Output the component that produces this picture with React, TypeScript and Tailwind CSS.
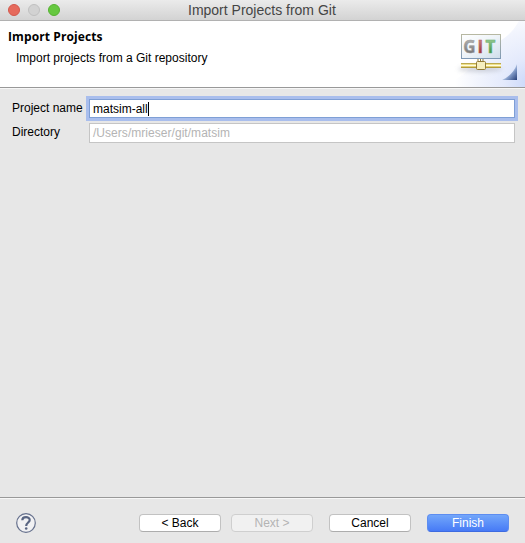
import type { ReactNode } from "react";

function TitleBar() {
  return (
    <div className="flex h-[21px] shrink-0 items-center border-b border-[#b1b1b1] bg-linear-to-b from-[#ebebeb] to-[#d3d3d3]">
      <div className="flex gap-2 pl-2">
        <span className="size-3 rounded-full border border-[#d3584c] bg-[#e66a5c]" />
        <span className="size-3 rounded-full border border-[#c0c0c0] bg-[#d2d2d2]" />
        <span className="size-3 rounded-full border border-[#55b231] bg-[#66c840]" />
      </div>
      <h1 className="ml-32 whitespace-nowrap text-[14px] leading-5 text-[#454545]">
        Import Projects from Git
      </h1>
    </div>
  );
}

function GitBanner() {
  return (
    <svg className="block h-[66px] w-20 shrink-0" viewBox="445 21 80 66">
      <defs>
        <radialGradient id="glow" gradientUnits="userSpaceOnUse" cx="530" cy="84" r="75">
          <stop offset="0" stopColor="#c9d7fa" />
          <stop offset="0.35" stopColor="#e4eafc" />
          <stop offset="0.7" stopColor="#f1f4fd" />
          <stop offset="1" stopColor="#ffffff" />
        </radialGradient>
        <linearGradient id="panel" x1="0" y1="0" x2="1" y2="1">
          <stop offset="0" stopColor="#ffffff" />
          <stop offset="0.5" stopColor="#edf3f8" />
          <stop offset="1" stopColor="#cfdeea" />
        </linearGradient>
        <linearGradient id="frame" x1="0" y1="0" x2="0" y2="1">
          <stop offset="0" stopColor="#b7b8a2" />
          <stop offset="1" stopColor="#7f99b5" />
        </linearGradient>
        <linearGradient id="pipe" x1="0" y1="0" x2="0" y2="1">
          <stop offset="0" stopColor="#a38d32" />
          <stop offset="0.3" stopColor="#eee08a" />
          <stop offset="0.5" stopColor="#fffde0" />
          <stop offset="0.8" stopColor="#d4bb43" />
          <stop offset="1" stopColor="#8d7a36" />
        </linearGradient>
        <linearGradient id="corner" x1="0" y1="0" x2="1" y2="1">
          <stop offset="0.4" stopColor="#dce7fa" />
          <stop offset="0.65" stopColor="#7f97c5" />
          <stop offset="1" stopColor="#263e78" />
        </linearGradient>
        <linearGradient id="g" x1="0" y1="0" x2="0" y2="1">
          <stop offset="0.2" stopColor="#b0b0b0" />
          <stop offset="0.8" stopColor="#777" />
        </linearGradient>
        <linearGradient id="i" x1="0" y1="0" x2="0" y2="1">
          <stop offset="0.2" stopColor="#c78283" />
          <stop offset="0.8" stopColor="#9c3035" />
        </linearGradient>
        <linearGradient id="t" x1="0" y1="0" x2="0" y2="1">
          <stop offset="0.2" stopColor="#94c990" />
          <stop offset="0.8" stopColor="#3b9143" />
        </linearGradient>
        <filter id="soft" x="-30%" y="-80%" width="160%" height="260%">
          <feGaussianBlur stdDeviation="2" />
        </filter>
      </defs>
      <path d="M445 87 Q485 60 500 41 Q512 34 519 21 H525 V87Z" fill="url(#glow)" />
      <ellipse cx="480" cy="69" rx="22" ry="3" fill="#b9bdc8" opacity="0.65" filter="url(#soft)" />
      <rect x="461.5" y="34.5" width="39" height="24" fill="url(#panel)" stroke="url(#frame)" />
      <g fontFamily="Open Sans, Noto Sans, sans-serif" fontSize="17" fontWeight="700" strokeWidth="0.5">
        <text x="463.3" y="53" fill="url(#g)" stroke="#999">G</text>
        <text x="477.5" y="53" fill="url(#i)" stroke="#b25a5d">I</text>
        <text x="485.5" y="53" fill="url(#t)" stroke="#6bad6b">T</text>
      </g>
      <path d="M478 59 V61 M480.5 59 V61 M483 59 V61" stroke="#927e39" />
      <rect x="461" y="63" width="40" height="5" fill="url(#pipe)" />
      <rect x="476.5" y="61.5" width="9" height="8" rx="1" fill="#f5eebf" stroke="#927b36" />
      <path d="M502 80 Q513 75 517 64 V80Z" fill="url(#corner)" />
    </svg>
  );
}

function Header() {
  return (
    <header className="flex h-[67px] shrink-0 justify-between border-b border-[#999] bg-white">
      <div className="pt-2 pl-2 text-black">
        <h2 className="font-['Open_Sans','Noto_Sans',sans-serif] text-xs leading-4 font-bold tracking-[0.1px]">
          Import Projects
        </h2>
        <p className="mt-[5px] ml-2 text-xs leading-4">Import projects from a Git repository</p>
      </div>
      <GitBanner />
    </header>
  );
}

function Form() {
  return (
    <main className="flex flex-1 flex-col gap-[5px] border-t border-[#f7f7f7] pt-[10px] pr-[10px] pl-3 text-xs">
      <div className="flex h-[19px] items-center">
        <label className="w-[77px] pb-0.5 whitespace-nowrap">Project name</label>
        <div className="flex h-[19px] flex-1 items-center border border-[#7f9fd5] bg-white pl-[3px] ring-3 ring-[#a9beed]">
          <span>matsim-all</span>
          <span className="h-[14px] w-px bg-black" />
        </div>
      </div>
      <div className="flex h-5 items-center">
        <label className="w-[77px] pb-0.5">Directory</label>
        <div className="flex h-5 flex-1 items-center border border-[#c5c5c5] bg-white pl-[3px] tracking-[0.04px] text-[#b4b4b4]">
          /Users/mrieser/git/matsim
        </div>
      </div>
    </main>
  );
}

function PushButton({ className, children }: { className: string; children: ReactNode }) {
  return (
    <button
      className={`flex h-[18px] w-[82px] items-center justify-center rounded-[4px] border text-xs leading-none ${className}`}
    >
      {children}
    </button>
  );
}

function Footer() {
  return (
    <footer className="flex h-[46px] shrink-0 items-center border-t border-[#999] pr-4 pl-4 shadow-[inset_0_1px_0_#f7f7f7]">
      <svg className="mt-1 size-5" viewBox="0 0 20 20">
        <circle cx="10" cy="10" r="9.3" fill="#f1f1f3" stroke="#66718d" strokeWidth="1.2" />
        <path d="M6.3 7.2 C6.3 3.1 13.7 3.1 13.7 7 C13.7 9.5 10.2 9.6 10.2 13" fill="none" stroke="#596582" strokeWidth="2.2" />
        <circle cx="10.2" cy="15.5" r="1.3" fill="#596582" />
      </svg>
      <div className="mt-1 ml-auto flex">
        <PushButton className="border-[#c2c2c2] border-b-[#adadad] bg-white text-black">&lt; Back</PushButton>
        <PushButton className="ml-[10px] border-[#cfcfcf] bg-[#f1f1f1] text-[#b4b4b4]">Next &gt;</PushButton>
        <PushButton className="ml-4 border-[#c2c2c2] border-b-[#adadad] bg-white text-black">Cancel</PushButton>
        <PushButton className="ml-4 border-[#5d8df0] border-b-[#3e6be0] bg-linear-to-b from-[#73a6fa] to-[#477af6] text-white">
          Finish
        </PushButton>
      </div>
    </footer>
  );
}

export default function App() {
  return (
    <div className="flex h-[543px] w-[525px] flex-col overflow-hidden bg-[#e7e7e7] font-['Liberation_Sans',Arial,sans-serif] text-black">
      <TitleBar />
      <Header />
      <Form />
      <Footer />
    </div>
  );
}
